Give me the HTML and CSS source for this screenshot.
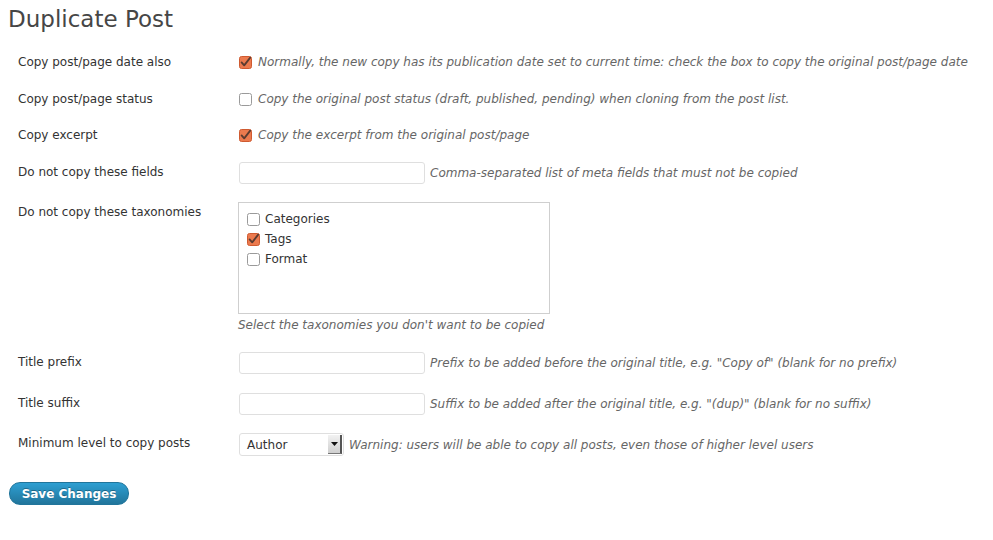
FILE: index.html
```html
<!DOCTYPE html>
<html>
<head>
<meta charset="utf-8">
<link rel="stylesheet" href="styles.css">
</head>
<body>
<div class="wrap">
  <h2 class="title">Duplicate Post</h2>
  <div class="form">
    <div class="row r1">
      <div class="label">Copy post/page date also</div>
      <div class="field line"><span class="cb on"><svg width="13" height="13" viewBox="0 0 13 13"><rect x="0.5" y="0.5" width="12" height="12" rx="2" fill="#ec7a4e" stroke="#cf5a30"/><path d="M2.6 6.4 L5.2 9.4 L11.2 1.6" fill="none" stroke="#5b3b30" stroke-width="1.8" stroke-linecap="round" stroke-linejoin="round"/></svg></span><span class="desc">Normally, the new copy has its publication date set to current time: check the box to copy the original post/page date</span></div>
    </div>
    <div class="row r2">
      <div class="label">Copy post/page status</div>
      <div class="field line"><span class="cb"><svg width="13" height="13" viewBox="0 0 13 13"><rect x="0.5" y="0.5" width="12" height="12" rx="2" fill="#fff" stroke="#9a9a9a"/></svg></span><span class="desc">Copy the original post status (draft, published, pending) when cloning from the post list.</span></div>
    </div>
    <div class="row r3">
      <div class="label">Copy excerpt</div>
      <div class="field line"><span class="cb on"><svg width="13" height="13" viewBox="0 0 13 13"><rect x="0.5" y="0.5" width="12" height="12" rx="2" fill="#ec7a4e" stroke="#cf5a30"/><path d="M2.6 6.4 L5.2 9.4 L11.2 1.6" fill="none" stroke="#5b3b30" stroke-width="1.8" stroke-linecap="round" stroke-linejoin="round"/></svg></span><span class="desc">Copy the excerpt from the original post/page</span></div>
    </div>
    <div class="row rin r4">
      <div class="label">Do not copy these fields</div>
      <div class="field line"><span class="input"></span><span class="desc">Comma-separated list of meta fields that must not be copied</span></div>
    </div>
    <div class="row r5">
      <div class="label">Do not copy these taxonomies</div>
      <div class="field">
        <div class="taxbox">
          <div class="tax"><span class="cb"><svg width="13" height="13" viewBox="0 0 13 13"><rect x="0.5" y="0.5" width="12" height="12" rx="2" fill="#fff" stroke="#9a9a9a"/></svg></span><span>Categories</span></div>
          <div class="tax"><span class="cb on"><svg width="13" height="13" viewBox="0 0 13 13"><rect x="0.5" y="0.5" width="12" height="12" rx="2" fill="#ec7a4e" stroke="#cf5a30"/><path d="M2.6 6.4 L5.2 9.4 L11.2 1.6" fill="none" stroke="#5b3b30" stroke-width="1.8" stroke-linecap="round" stroke-linejoin="round"/></svg></span><span>Tags</span></div>
          <div class="tax"><span class="cb"><svg width="13" height="13" viewBox="0 0 13 13"><rect x="0.5" y="0.5" width="12" height="12" rx="2" fill="#fff" stroke="#9a9a9a"/></svg></span><span>Format</span></div>
        </div>
        <div class="desc below">Select the taxonomies you don't want to be copied</div>
      </div>
    </div>
    <div class="row rin r6">
      <div class="label">Title prefix</div>
      <div class="field line"><span class="input"></span><span class="desc">Prefix to be added before the original title, e.g. "Copy of" (blank for no prefix)</span></div>
    </div>
    <div class="row rin r7">
      <div class="label">Title suffix</div>
      <div class="field line"><span class="input"></span><span class="desc">Suffix to be added after the original title, e.g. "(dup)" (blank for no suffix)</span></div>
    </div>
    <div class="row rin r8">
      <div class="label">Minimum level to copy posts</div>
      <div class="field line"><span class="select"><span class="seltext">Author</span><span class="selbtn"><svg width="7" height="4" viewBox="0 0 7 4"><path d="M0 0 H7 L3.5 4 Z" fill="#111"/></svg></span></span><span class="desc">Warning: users will be able to copy all posts, even those of higher level users</span></div>
    </div>
  </div>
  <div class="submit"><button class="button-primary">Save Changes</button></div>
</div>
</body>
</html>
```
FILE: styles.css
```css
html, body {
  margin: 0;
  padding: 0;
  background: #fff;
}
body {
  font-family: "DejaVu Sans", "Liberation Sans", sans-serif;
  font-size: 12px;
  color: #333;
}
.wrap {
  padding: 0 0 0 8px;
}
.title {
  margin: 0;
  padding: 5px 0 0 0;
  font-size: 23px;
  font-weight: normal;
  line-height: 29px;
  color: #464646;
}
.form {
  padding-top: 10px;
}
.row {
  display: grid;
  grid-template-columns: 231px 1fr;
  align-items: start;
}
.label {
  padding-left: 10px;
  line-height: 16px;
  color: #333;
}
.line {
  display: flex;
  align-items: center;
  white-space: nowrap;
}
.desc {
  font-style: italic;
  color: #666;
  line-height: 16px;
}
.cb {
  display: inline-flex;
  width: 13px;
  height: 13px;
  margin-right: 6px;
  flex: none;
}
.r1 { padding: 10px 0 11px; }
.r2 { padding: 10px 0 10px; }
.r3 { padding: 10px 0 10px; }
.rin .label { padding-top: 2px; }
.r4 { padding: 9px 0 10px; }
.r6 { padding: 9px 0 10px; }
.r7 { padding: 9px 0 9px; }
.r8 { padding: 9px 0 9px; }
.input {
  display: inline-block;
  box-sizing: border-box;
  width: 186px;
  height: 22px;
  border: 1px solid #dfdfdf;
  border-radius: 3px;
  background: #fff;
  margin-right: 5px;
  flex: none;
}
.r5 { padding: 10px 0 10px; }
.r5 .field { margin-top: -2px; margin-left: -1px; }
.taxbox {
  box-sizing: border-box;
  width: 312px;
  height: 112px;
  border: 1px solid #cfcfcf;
  padding: 6px 0 0 8px;
  background: #fff;
}
.tax {
  display: flex;
  align-items: center;
  height: 20px;
  color: #333;
}
.tax .cb { margin-right: 5px; }
.below {
  margin-top: 3px;
}
.select {
  display: inline-flex;
  align-items: center;
  justify-content: space-between;
  box-sizing: border-box;
  width: 105px;
  height: 23px;
  border: 1px solid #dfdfdf;
  border-radius: 3px;
  background: #fff;
  margin-right: 5px;
  padding: 0 1px 0 7px;
  flex: none;
}
.seltext { color: #333; }
.selbtn {
  display: flex;
  align-items: center;
  justify-content: center;
  width: 14px;
  height: 19px;
  background: linear-gradient(to bottom, #f2f2f2, #cfcfcf);
  border-right: 2px solid #555;
  border-bottom: 1px solid #777;
  box-sizing: border-box;
}
.submit {
  padding: 17px 0 0 1px;
}
.button-primary {
  font-family: "DejaVu Sans", "Liberation Sans", sans-serif;
  font-size: 12px;
  font-weight: bold;
  color: #fff;
  width: 120px;
  height: 23px;
  padding: 0;
  border: 1px solid #21759b;
  border-radius: 11px;
  background: linear-gradient(to bottom, #2e9fd2, #21759b);
  text-shadow: 0 -1px 0 rgba(0,0,0,0.3);
  line-height: 20px;
}
```
